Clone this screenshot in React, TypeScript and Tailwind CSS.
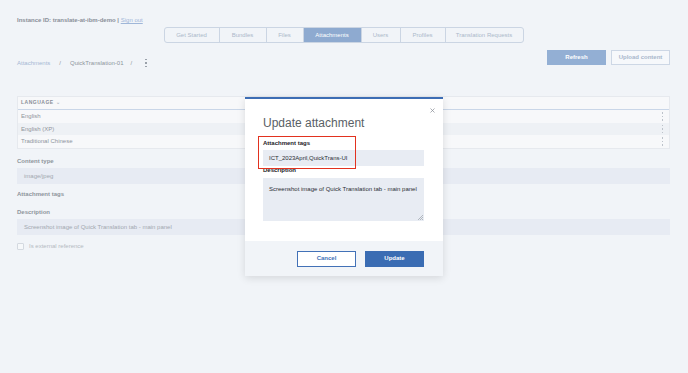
import { X } from "lucide-react"

const tabs = ["Get Started", "Bundles", "Files", "Attachments", "Users", "Profiles", "Translation Requests"]
const tabWidths = ["w-[54px]", "w-[47px]", "w-[37px]", "w-[58px]", "w-[39px]", "w-[45px]", "w-[78px]"]
const rows = ["English", "English (XP)", "Traditional Chinese"]

function Kebab({ className }: { className: string }) {
  return (
    <div className={"flex flex-col items-center gap-[2px] " + className}>
      <span className="w-[1.5px] h-[1.5px] bg-current" />
      <span className="w-[1.5px] h-[1.5px] bg-current" />
      <span className="w-[1.5px] h-[1.5px] bg-current" />
    </div>
  )
}

export default function App() {
  return (
    <div className="relative w-[688px] h-[373px] overflow-hidden bg-[#f1f4f8] font-['Liberation_Sans',Arial,sans-serif]">
      <div className="pl-[17px] pr-[18px] pt-[16px]">
        <div className="h-[8px] text-[6px] leading-[8px] font-bold text-[#8a8f98]">
          Instance ID: translate-at-ibm-demo | <span className="font-normal text-[#9fb6d8] underline">Sign out</span>
        </div>

        <div className="mt-[3px] flex justify-center">
          <div className="flex h-[16px] rounded-[3px] border border-[#cbd5e3] overflow-hidden">
            {tabs.map((t, i) => (
              <div
                key={t}
                className={
                  "flex items-center justify-center text-[6px] border-l first:border-l-0 border-[#cbd5e3] " +
                  tabWidths[i] +
                  (t === "Attachments" ? " bg-[#8eaad0] text-white" : " text-[#acb9ca]")
                }
              >
                {t}
              </div>
            ))}
          </div>
        </div>

        <div className="mt-[7px] flex justify-between">
          <div className="mt-[9px] flex items-center h-[8px] text-[6px] text-[#8e949c]">
            <span className="text-[#a5b8d4]">Attachments</span>
            <span className="ml-[9px]">/</span>
            <span className="ml-[9px]">QuickTranslation-01</span>
            <span className="ml-[7px]">/</span>
            <Kebab className="ml-[13px] text-[#9aa1aa]" />
          </div>
          <div className="flex gap-[5px]">
            <div className="w-[59px] h-[15px] flex items-center justify-center bg-[#93afd4] text-white text-[6px] font-bold">
              Refresh
            </div>
            <div className="w-[59px] h-[15px] flex items-center justify-center border border-[#cdd7e5] bg-[#f6f8fb] text-[#a8b7cc] text-[6px] font-bold">
              Upload content
            </div>
          </div>
        </div>

        <div className="mt-[29px] border border-[#e6e9ee] bg-[#f7f8fa]">
          <div className="h-[13px] flex items-center pl-[3px] border-b border-[#c9d6e8] text-[5px] font-bold tracking-[0.5px] text-[#8a8f98]">
            LANGUAGE <span className="ml-[2px] text-[#b5bcc6]">⌄</span>
          </div>
          {rows.map((r, i) => (
            <div
              key={r}
              className={"h-[12.7px] flex items-center justify-between pl-[3px] pr-[6px] text-[6px] text-[#8e949c] " + (i === 1 ? "bg-[#eef1f5]" : "")}
            >
              {r}
              <Kebab className="text-[#bcc2ca]" />
            </div>
          ))}
        </div>

        <div className="mt-[8px] h-[8px] text-[6px] leading-[8px] font-bold text-[#8e949c]">Content type</div>
        <div className="mt-[3px] h-[16px] flex items-center pl-[7px] bg-[#e7ebf3] text-[6px] text-[#a2a8b0]">image/jpeg</div>

        <div className="mt-[6px] h-[8px] text-[6px] leading-[8px] font-bold text-[#8e949c]">Attachment tags</div>

        <div className="mt-[10px] h-[8px] text-[6px] leading-[8px] font-bold text-[#8e949c]">Description</div>
        <div className="mt-[3px] h-[16px] flex items-center pl-[7px] bg-[#e7ebf3] text-[6px] text-[#a2a8b0]">
          Screenshot image of Quick Translation tab - main panel
        </div>

        <div className="mt-[7px] flex items-center gap-[5px] h-[8px]">
          <span className="w-[7px] h-[7px] border border-[#d4d9e0] rounded-[1px] bg-[#f6f8fa]" />
          <span className="text-[6px] text-[#b4bac2]">Is external reference</span>
        </div>
      </div>

      <div className="absolute left-[245px] top-[97px] w-[198px] h-[179px] bg-white border-t-2 border-[#3d6db4] shadow-[0_2px_8px_rgba(0,0,0,0.12)] flex flex-col">
        <X className="absolute right-[7px] top-[8px] w-[7px] h-[7px] text-[#8b9098]" strokeWidth={2.5} />
        <div className="relative flex-1 pl-[18px] pr-[19px] pt-[17px]">
          <div className="h-[14px] text-[12px] leading-[14px] text-[#5a5f66]">Update attachment</div>
          <div className="absolute left-[13px] top-[37px] w-[98px] h-[33px] border-[1.5px] border-[#e2321f]" />
          <div className="mt-[9px] h-[8px] text-[6px] leading-[8px] font-bold text-[#1e2228]">Attachment tags</div>
          <div className="mt-[3px] h-[16px] flex items-center pl-[6px] bg-[#e8ecf3] text-[6px] text-[#2a2e34]">
            ICT_2023April,QuickTrans-UI
          </div>
          <div className="mt-[0px] h-[8px] text-[6px] leading-[8px] font-bold text-[#1e2228]">Description</div>
          <div className="relative mt-[4px] h-[43px] bg-[#e8ecf3] px-[6px] pt-[7px] text-[6px] text-[#2a2e34]">
            Screenshot image of Quick Translation tab - main panel
            <svg className="absolute right-[1px] bottom-[1px]" width="5" height="5" viewBox="0 0 5 5">
              <path d="M5 0 L0 5 M5 2 L2 5 M5 4 L4 5" stroke="#9aa0a8" strokeWidth="0.7" />
            </svg>
          </div>
        </div>
        <div className="h-[35px] bg-[#f1f4f8] flex items-center justify-end gap-[9px] pr-[19px]">
          <div className="w-[59px] h-[16px] flex items-center justify-center border border-[#4271b7] bg-white text-[#4271b7] text-[6px] font-bold">
            Cancel
          </div>
          <div className="w-[59px] h-[16px] flex items-center justify-center bg-[#3a6cb3] text-white text-[6px] font-bold">
            Update
          </div>
        </div>
      </div>
    </div>
  )
}
